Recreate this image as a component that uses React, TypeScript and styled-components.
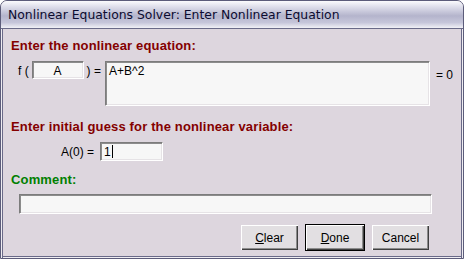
import styled, { createGlobalStyle } from "styled-components";

const GlobalStyle = createGlobalStyle`
  html, body {
    margin: 0;
    padding: 0;
    background: #ffffff;
    font-family: "Liberation Sans", Arial, sans-serif;
  }
`;

const Window = styled.div`
  width: 464px;
  height: 259px;
  box-sizing: border-box;
  border: 1px solid #5c5c7a;
  border-radius: 7px 7px 0 0;
  background: #ddd6de;
  display: flex;
  flex-direction: column;
  overflow: hidden;
`;

const TitleBar = styled.div`
  height: 27px;
  flex-shrink: 0;
  display: flex;
  align-items: center;
  padding: 0 7px;
  background: linear-gradient(
    to bottom,
    #fbfbfd 0%,
    #e0e0ec 20%,
    #b4b4cc 55%,
    #c6c6da 80%,
    #f1f1f6 100%
  );
  border-bottom: 1px solid #6a6a88;
  color: #0c0c30;
  font-family: "DejaVu Sans", Verdana, sans-serif;
  font-size: 12.4px;
  letter-spacing: 0;
`;

const Client = styled.div`
  flex: 1;
  display: flex;
  flex-direction: column;
  padding: 9px 10px 0 10px;
  box-shadow: inset 1px 0 0 #efedf2, inset -1px 0 0 #efedf2, inset 2px 0 0 #6a6a88,
    inset -2px 0 0 #6a6a88, inset 0 -1px 0 #efedf2, inset 0 -2px 0 #6a6a88;
`;

const Heading = styled.div<{ $color: string; $top?: number }>`
  font-weight: bold;
  font-size: 13px;
  line-height: 15px;
  letter-spacing: 0.15px;
  margin-top: ${(p) => p.$top ?? 0}px;
  color: ${(p) => p.$color};
`;

const Row = styled.div<{ $top: number; $left?: number }>`
  display: flex;
  align-items: flex-start;
  margin-top: ${(p) => p.$top}px;
  margin-left: ${(p) => p.$left ?? 0}px;
  font-size: 12px;
  color: #000;
`;

const Label = styled.span<{ $top?: number; $width?: number; $pad?: number }>`
  display: inline-block;
  margin-top: ${(p) => p.$top ?? 3}px;
  padding: 0 ${(p) => p.$pad ?? 0}px;
  width: ${(p) => (p.$width ? `${p.$width}px` : "auto")};
  white-space: nowrap;
  box-sizing: border-box;
`;

const Field = styled.div<{ $w: number; $h: number; $center?: boolean }>`
  width: ${(p) => p.$w}px;
  height: ${(p) => p.$h}px;
  box-sizing: border-box;
  background: #f7f7f7;
  border-top: 1px solid #7c7c7c;
  border-left: 1px solid #7c7c7c;
  border-right: 1px solid #ffffff;
  border-bottom: 1px solid #ffffff;
  box-shadow: inset 1px 1px 0 #8c8c8c, inset -1px -1px 0 #e6e3e6;
  padding: 2px 3px;
  font-size: 12px;
  line-height: 14px;
  text-align: ${(p) => (p.$center ? "center" : "left")};
  flex-shrink: 0;
`;

const Caret = styled.span`
  display: inline-block;
  width: 1px;
  height: 13px;
  background: #000;
  vertical-align: -2px;
  margin-left: 1px;
`;

const Buttons = styled.div`
  display: flex;
  justify-content: flex-end;
  gap: 7px;
  margin-top: 11px;
  padding-right: 24px;
`;

const Button = styled.button<{ $default?: boolean }>`
  width: ${(p) => (p.$default ? 58 : 57)}px;
  height: 25px;
  box-sizing: border-box;
  padding: 0;
  font-family: "Liberation Sans", Arial, sans-serif;
  font-size: 12px;
  color: #000;
  background: #e2dfe2;
  border: none;
  outline: ${(p) => (p.$default ? "1px solid #000" : "none")};
  outline-offset: 0;
  box-shadow: inset 1px 1px 0 #ffffff, inset -1px -1px 0 #404040,
    inset -2px -2px 0 #8c8c8c;
  margin: ${(p) => (p.$default ? "0 1px" : "0")};

  u {
    text-decoration: underline;
  }
`;

const EqualsZero = styled.span`
  margin-left: 6px;
  margin-top: 7px;
  white-space: nowrap;
`;

export default function App() {
  return (
    <>
      <GlobalStyle />
      <Window>
        <TitleBar>Nonlinear Equations Solver: Enter Nonlinear Equation</TitleBar>
        <Client>
          <Heading $color="#840000">Enter the nonlinear equation:</Heading>
          <Row $top={8} $left={7}>
            <Label $width={15} $top={3}>f (</Label>
            <Field $w={52} $h={18} $center>
              A
            </Field>
            <Label $width={23} $top={3} $pad={3}>) =</Label>
            <Field $w={325} $h={45}>A+B^2</Field>
            <EqualsZero>= 0</EqualsZero>
          </Row>
          <Heading $color="#840000" $top={13}>
            Enter initial guess for the nonlinear variable:
          </Heading>
          <Row $top={8} $left={50}>
            <Label $width={39} $top={3}>A(0) =</Label>
            <Field $w={63} $h={19}>
              1<Caret />
            </Field>
          </Row>
          <Heading $color="#008000" $top={11}>
            Comment:
          </Heading>
          <Row $top={7} $left={8}>
            <Field $w={413} $h={20} />
          </Row>
          <Buttons>
            <Button>
              <u>C</u>lear
            </Button>
            <Button $default>
              <u>D</u>one
            </Button>
            <Button>Cancel</Button>
          </Buttons>
        </Client>
      </Window>
    </>
  );
}
